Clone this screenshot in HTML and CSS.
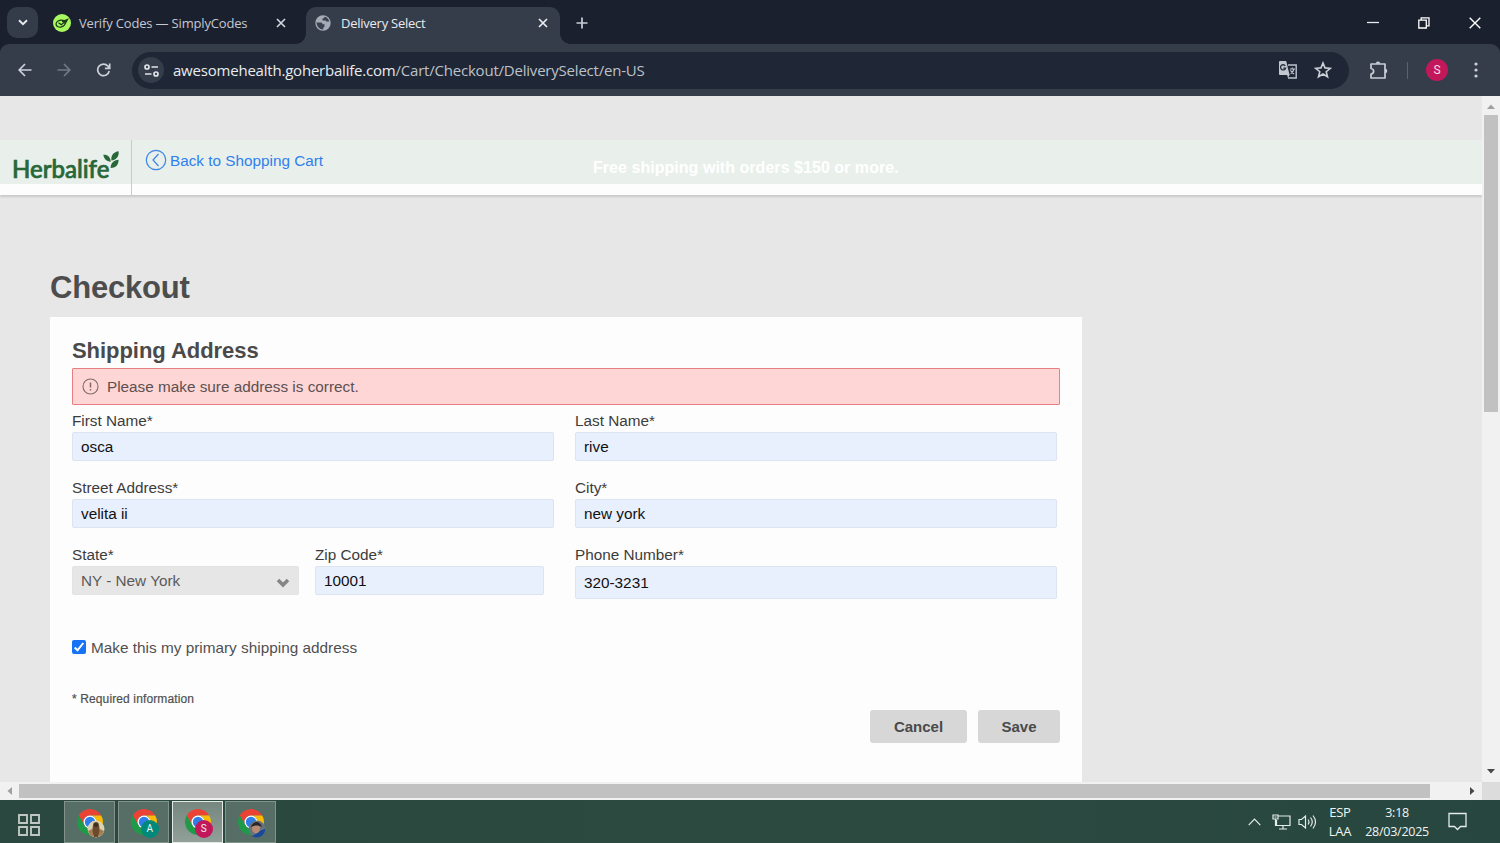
FILE: index.html
```
<!DOCTYPE html>
<html lang="en">
<head>
    <meta charset="UTF-8">
    <meta name="viewport" content="width=device-width, initial-scale=1.0">
    <link rel="stylesheet" href="styles.css">
    <title>Delivery Select</title>
</head>
<body>
    <svg class="sprite" width="0" height="0">
        <symbol id="chrome" viewBox="0 0 28 28">
            <path fill="#ea4335" d="M1.9 7A14 14 0 0 1 26.1 7H14a7 7 0 0 0-6.1 10.5z"/>
            <path fill="#fbbc05" d="M26.1 7A14 14 0 0 1 14 28l6.1-10.5A7 7 0 0 0 14 7z"/>
            <path fill="#1e9b48" d="M1.9 7A14 14 0 0 0 14 28l6.1-10.5a7 7 0 0 1-12.2 0z"/>
            <circle cx="14" cy="14" r="7" fill="#fff"/>
            <circle cx="14" cy="14" r="5.6" fill="#2f7de9"/>
        </symbol>
    </svg>

    <!-- Browser tabs -->
    <div class="tab-strip">
        <button class="tab-search"><svg width="10" height="7" viewBox="0 0 10 7"><path d="M1 1.2l4 4 4-4" fill="none" stroke="#e6e9ee" stroke-width="2"/></svg></button>
        <div class="tab">
            <svg width="18" height="18" viewBox="0 0 18 18"><circle cx="9" cy="9" r="9" fill="#a8f860"/><g fill="none" stroke="#1c3a18" stroke-width="1.3"><ellipse cx="7.6" cy="9.600" rx="4.600" ry="3.400" transform="rotate(-15 7.6 9.6)"/><path d="M5.500 8.800l2.800 2 6.200-5.300M9 7.500l5.500-2-2.500 4.500"/></g></svg>
            <span class="tab-title verify">Verify Codes — SimplyCodes</span>
            <svg class="close" width="10" height="10" viewBox="0 0 10 10"><path d="M1 1l8 8M9 1l-8 8" stroke="#d5d9df" stroke-width="1.6"/></svg>
        </div>
        <div class="tab active">
            <svg width="16" height="16" viewBox="0 0 16 16"><circle cx="8" cy="8" r="7.700" fill="#a6abb5"/><path d="M1.500 7.500h4.200c1.200 0 1.800.8 1.800 1.800h2v2.500c-1 .3-1.200 1-1.300 2.600-3.500.2-6.400-2.800-6.700-6.900zM9.500 1.700c-.2 1.300-.6 1.700-2 1.700v2h2.700c.5 0 .8.500.8 1.200h3.300C14 4.200 12 2 9.500 1.700z" fill="#3a4250"/></svg>
            <span class="tab-title">Delivery Select</span>
            <svg class="close" width="10" height="10" viewBox="0 0 10 10"><path d="M1 1l8 8M9 1l-8 8" stroke="#eceef1" stroke-width="1.7"/></svg>
        </div>
        <svg class="new-tab" width="12" height="12" viewBox="0 0 12 12"><path d="M6 .5v11M.5 6h11" stroke="#c9ced6" stroke-width="1.7"/></svg>
        <div class="window-buttons">
            <svg width="12" height="12" viewBox="0 0 12 12"><path d="M0 5.500h12" stroke="#e8eaee" stroke-width="1.300"/></svg>
            <svg width="12" height="12" viewBox="0 0 12 12"><path d="M.8 3.200h7.500v7.800H.8zM3.200 3V.8H11v8H8.500" fill="none" stroke="#fff" stroke-width="1.300"/></svg>
            <svg width="12" height="12" viewBox="0 0 12 12"><path d="M.7.700l10.600 10.600M11.300.700L.7 11.300" stroke="#fff" stroke-width="1.400"/></svg>
        </div>
    </div>

    <!-- Address bar -->
    <div class="toolbar">
        <svg width="14" height="14" viewBox="0 0 14 14"><path d="M13.500 7H1.500M7 1L1.200 7 7 13" fill="none" stroke="#ccd1d9" stroke-width="1.700"/></svg>
        <svg width="14" height="14" viewBox="0 0 14 14"><path d="M.5 7h12M7 1l5.800 6L7 13" fill="none" stroke="#727985" stroke-width="1.700"/></svg>
        <svg width="15" height="14" viewBox="0 0 15 14"><path d="M13.200 8A5.800 5.800 0 1 1 12 3.200L13.700 5M13.700.500v4.800H8.900" fill="none" stroke="#ccd1d9" stroke-width="1.700"/></svg>
        <div class="address">
            <span class="site-info"><svg width="15" height="13" viewBox="0 0 15 13"><g fill="none" stroke="#dfe3e8" stroke-width="1.700"><circle cx="3" cy="3" r="2"/><path d="M7.500 3H14M1 10h6.500"/><circle cx="12" cy="10" r="2"/></g></svg></span>
            <span class="url"><b>awesomehealth.goherbalife.com</b>/Cart/Checkout/DeliverySelect/en-US</span>
            <svg class="translate" width="20" height="20" viewBox="0 0 20 20">
                <path d="M10 5h8.200v13H10" fill="none" stroke="#bcc3cd" stroke-width="1.400"/>
                <path d="M2 1h6.200l3.400 14H2a1 1 0 0 1-1-1V2a1 1 0 0 1 1-1z" fill="#c3c8d0"/>
                <path d="M11.800 9H17M14.300 7.500V9M16 9c-.6 2.200-1.800 3.700-3.300 4.700M12.500 10.200c.8 1.700 2 2.900 3.600 3.800" fill="none" stroke="#c3c8d0" stroke-width="1.100"/>
                <path d="M7.300 5.900A2.600 2.600 0 1 0 7.600 8.200H5.300" fill="none" stroke="#29313e" stroke-width="1.300"/>
                <path d="M9 14.500h2.700l-1.700 3.500z" fill="#c3c8d0"/>
            </svg>
            <svg width="18" height="18" viewBox="0 0 18 18"><path d="M9 2l2 4.900 5.300.4-4.100 3.400 1.300 5.100L9 13l-4.500 2.800 1.300-5.100L1.700 7.300 7 6.900z" fill="none" stroke="#cbd0d8" stroke-width="1.600"/></svg>
        </div>
        <svg class="puzzle" width="19" height="19" viewBox="0 0 19 19"><path d="M2 3h14v14H2v-4c3.500-.5 3.500-5 0-5.500z" fill="none" stroke="#c8cdd6" stroke-width="1.700" stroke-linejoin="round"/><path d="M6.800 2.800a2.200 2.300 0 0 1 4.400 0zM16 7.800a2.300 2.200 0 0 1 0 4.400z" fill="#c8cdd6"/></svg>
        <span class="divider"></span>
        <span class="profile">S</span>
        <svg class="more" width="4" height="16" viewBox="0 0 4 16" fill="#ccd1d9"><circle cx="2" cy="2" r="1.600"/><circle cx="2" cy="8" r="1.600"/><circle cx="2" cy="14" r="1.600"/></svg>
    </div>

    <div class="viewport">
        <div class="page">
            <header class="site-header">
                <div class="logo"><span>Herbalife</span><svg width="16" height="19" viewBox="0 0 16 19" fill="#276738"><path d="M.3 3.800C4.500 3.300 7.500 6 7.700 10.800 3.500 10.500 1 8 .3 3.800zM15.600.2c.6 5.500-2.300 8.800-7.200 9.400C7.900 4.300 10.500.9 15.600.2zM15.600 8.800c-.2 5.600-3 8.200-8 8.200C7.900 12.300 10.500 9 15.600 8.800z"/></svg></div>
                <a class="back-link" href="#"><svg width="22" height="22" viewBox="0 0 22 22"><circle cx="11" cy="11" r="9.700" fill="none" stroke="#3a86e8" stroke-width="1.200"/><path d="M13.500 5L8 11l5.500 6" fill="none" stroke="#3a86e8" stroke-width="1.200"/></svg><span>Back to Shopping Cart</span></a>
                <p class="promo">Free shipping with orders $150 or more.</p>
            </header>

            <main>
                <h1>Checkout</h1>
                <form class="card">
                    <h2>Shipping Address</h2>
                    <div class="alert">
                        <svg width="17" height="17" viewBox="0 0 17 17"><circle cx="8.500" cy="8.500" r="7.500" fill="none" stroke="#806a6a" stroke-width="1.100"/><path d="M8.500 4.500v5M8.500 11v1.600" stroke="#806a6a" stroke-width="1.500"/></svg>
                        <span>Please make sure address is correct.</span>
                    </div>
                    <div class="fields">
                        <label>First Name*<input type="text" value="osca"></label>
                        <label>Last Name*<input type="text" value="rive"></label>
                        <label>Street Address*<input type="text" value="velita ii"></label>
                        <label>City*<input type="text" value="new york"></label>
                        <div class="state-zip">
                            <label>State*<span class="select">NY - New York<svg width="14" height="10" viewBox="0 0 14 10"><path d="M2 2l5 5 5-5" fill="none" stroke="#858585" stroke-width="3.500"/></svg></span></label>
                            <label>Zip Code*<input type="text" value="10001"></label>
                        </div>
                        <label>Phone Number*<input class="phone" type="text" value="320-3231"></label>
                    </div>
                    <div class="primary">
                        <span class="checkbox"><svg width="14" height="14" viewBox="0 0 14 14"><path d="M2.700 7.500l2.800 2.800 5.800-7.300" fill="none" stroke="#fff" stroke-width="2"/></svg></span>
                        <span>Make this my primary shipping address</span>
                    </div>
                    <p class="required">* Required information</p>
                    <div class="actions">
                        <button type="button" class="cancel">Cancel</button>
                        <button type="button" class="save">Save</button>
                    </div>
                </form>
            </main>
        </div>
        <div class="v-scroll">
            <svg width="8" height="5" viewBox="0 0 8 5"><path d="M0 5l4-4.500L8 5z" fill="#a0a0a0"/></svg>
            <div class="v-thumb"></div>
            <svg class="down" width="8" height="5" viewBox="0 0 8 5"><path d="M0 0l4 4.500L8 0z" fill="#484848"/></svg>
        </div>
        <div class="h-scroll">
            <svg width="5" height="8" viewBox="0 0 5 8"><path d="M5 0L.5 4 5 8z" fill="#a0a0a0"/></svg>
            <div class="h-thumb"></div>
            <svg class="right" width="5" height="8" viewBox="0 0 5 8"><path d="M0 0l4.500 4L0 8z" fill="#484848"/></svg>
        </div>
        <div class="corner"></div>
    </div>

    <!-- Windows taskbar -->
    <footer class="taskbar">
        <svg class="task-view" width="22" height="22" viewBox="0 0 22 22" fill="none" stroke="#bfc7c3" stroke-width="1.900"><path d="M1 1h8v8H1zM13 1h8v8h-8zM1 13h8v8H1zM13 13h8v8h-8z"/></svg>
        <div class="task"><svg width="26" height="26"><use href="#chrome"/></svg>
            <svg class="badge" width="18" height="18" viewBox="0 0 18 18"><circle cx="9" cy="9" r="8.500" fill="#d9d2b0"/><path d="M6 5c0-4 6-4 6 0l1 7-2 5H7l-2-5z" fill="#6a4a2c"/><path d="M1 11l4-2 2 8C4 16 2 14 1 11zM17 11l-4-2-2 8c3-1 5-3 6-6z" fill="#a57c4d"/><circle cx="9" cy="5" r="2" fill="#3c2e20"/></svg></div>
        <div class="task"><svg width="26" height="26"><use href="#chrome"/></svg><span class="badge teal">A</span></div>
        <div class="task current"><svg width="26" height="26"><use href="#chrome"/></svg><span class="badge pink">S</span></div>
        <div class="task"><svg width="26" height="26"><use href="#chrome"/></svg>
            <svg class="badge" width="18" height="18" viewBox="0 0 18 18"><circle cx="9" cy="9" r="8.500" fill="#69727a"/><path d="M3 16c5-1 8-6 14-7 .5 4-3 8.500-8 8.500-2 0-4-.5-6-1.500z" fill="#164a9a"/><ellipse cx="8" cy="8.500" rx="4" ry="5" fill="#b98b70"/><path d="M3 7c1-6 9-7 11 0-4-2-7-2-11 0z" fill="#27272b"/></svg></div>
        <div class="tray">
            <svg class="chevron" width="13" height="8" viewBox="0 0 13 8"><path d="M.7 7.200l5.800-6 5.800 6" fill="none" stroke="#e6ece9" stroke-width="1.200"/></svg>
            <svg class="network" width="19" height="16" viewBox="0 0 19 16"><g fill="none" stroke="#e6ece9" stroke-width="1.200"><path d="M6 2h12v9.500H4.500V6M1 1h5v4H1zM3.500 5v7M11 11.500V15M7 15h8"/></g><path d="M2.500 3h2" stroke="#e6ece9"/></svg>
            <svg class="sound" width="20" height="16" viewBox="0 0 20 16"><g fill="none" stroke="#e6ece9" stroke-width="1.200"><path d="M1 5.500h2.500L7.500 2v12l-4-3.500H1zM10 5.500q2 2.500 0 5M12.500 3.500q3.500 4.500 0 9M15 1.500q5 6.500 0 13"/></g></svg>
            <div class="lang"><span>ESP</span><span>LAA</span></div>
            <div class="clock"><span class="time">3:18</span><span>28/03/2025</span></div>
            <svg class="notify" width="19" height="19" viewBox="0 0 19 19"><path d="M1 1.500h17v13h-5.500l-3 3-3-3H1z" fill="none" stroke="#e6ece9" stroke-width="1.300"/></svg>
        </div>
    </footer>
</body>
</html>
```
FILE: styles.css
```
* {
    box-sizing: border-box;
}

body {
    font-family: "Liberation Sans", Arial, sans-serif;
    margin: 0;
    height: 843px;
    overflow: hidden;
    display: flex;
    flex-direction: column;
    background-color: #1b202f;
}

svg {
    display: block;
    flex: none;
}

.sprite {
    position: absolute;
}

h1, h2, p {
    margin: 0;
}

/* Tabs */
.tab-strip {
    height: 44px;
    flex: none;
    display: flex;
    align-items: center;
    padding: 1px 19px 0 7px;
    background-color: #1b202f;
    font-family: "Open Sans", "Noto Sans", sans-serif;
}

.tab-search {
    width: 31px;
    height: 31px;
    padding: 0;
    border: 0;
    border-radius: 10px;
    background-color: #343c4a;
    display: flex;
    align-items: center;
    justify-content: center;
}

.tab {
    display: flex;
    align-items: center;
    width: 253px;
    padding: 0 5px 0 15px;
    color: #c3c8d2;
}

.tab-title {
    font-size: 13px;
    margin-left: 8px;
    letter-spacing: -0.25px;
    white-space: nowrap;
}

.verify {
    letter-spacing: -0.17px;
}

.close {
    margin-left: auto;
}

.tab.active {
    position: relative;
    width: 254px;
    height: 37px;
    margin: 6px 0 0 15px;
    padding: 0 12px 6px 9px;
    border-radius: 10px 10px 0 0;
    background-color: #353d4b;
    color: #e9ebef;
}

.active .tab-title {
    margin-left: 10px;
}

/* flared bottom corners of the open tab */
.tab.active::before, .tab.active::after {
    content: "";
    position: absolute;
    bottom: 0;
    width: 10px;
    height: 10px;
}

.tab.active::before {
    left: -10px;
    background: radial-gradient(circle at 0 0, transparent 9.5px, #353d4b 10px);
}

.tab.active::after {
    right: -10px;
    background: radial-gradient(circle at 100% 0, transparent 9.5px, #353d4b 10px);
}

.new-tab {
    margin-left: 16px;
}

.window-buttons {
    display: flex;
    gap: 39px;
    margin-left: auto;
}

/* Toolbar */
.toolbar {
    height: 52px;
    flex: none;
    display: flex;
    align-items: center;
    gap: 25px;
    padding: 0 22px 0 18px;
    background-color: #353d4b;
    border-radius: 9px 9px 0 0;
    font-family: "Open Sans", "Noto Sans", sans-serif;
}

.address {
    flex: 1;
    height: 37px;
    display: flex;
    align-items: center;
    margin-left: -4px;
    padding: 0 17px 0 6px;
    border-radius: 19px;
    background-color: #1f2635;
}

.site-info {
    width: 26px;
    height: 26px;
    border-radius: 50%;
    background-color: #353d4b;
    display: flex;
    align-items: center;
    justify-content: center;
}

.url {
    margin: -1px 0 0 9px;
    font-size: 15px;
    letter-spacing: -0.21px;
    color: #bcc1ca;
    white-space: nowrap;
}

.url b {
    font-weight: normal;
    color: #e9ebef;
}

.translate {
    margin: 0 16px 0 auto;
}

.puzzle {
    margin-left: -5px;
}

.divider {
    width: 1px;
    height: 17px;
    margin-left: -6px;
    background-color: #5a6270;
}

.profile {
    width: 22px;
    height: 22px;
    margin-left: -7px;
    border-radius: 50%;
    background-color: #c2185b;
    color: #f2dce6;
    font: 12px/22px Roboto, sans-serif;
    text-align: center;
}

.more {
    margin-left: 1px;
}

/* Web page with its scrollbars */
.viewport {
    height: 704px;
    flex: none;
    display: grid;
    grid-template: 686px 18px / 1482px 18px;
}

.page {
    overflow: hidden;
    background-color: #e7e7e7;
    padding-top: 44px;
}

.site-header {
    height: 55px;
    display: flex;
    background: linear-gradient(#e9efeb 44px, #fdfdfd 44px);
    box-shadow: 0 2px 2px rgba(0, 0, 0, 0.13);
}

.logo {
    width: 132px;
    flex: none;
    display: flex;
    align-items: flex-start;
    padding: 11px 0 0 12px;
    border-right: 1px solid #c9cbca;
    color: #276738;
}

.logo span {
    width: 91px;
    margin-top: -1px;
    font: 500 24px/38px Lato, sans-serif;
    -webkit-text-stroke: 0.7px #276738;
}

.back-link {
    display: flex;
    align-items: flex-start;
    width: 182px;
    margin-left: 13px;
    padding-top: 9px;
    gap: 3px;
    color: #2f80ed;
    font-size: 15.300px;
    line-height: 24px;
    text-decoration: none;
    white-space: nowrap;
}

.promo {
    margin-left: 266px;
    padding-top: 16px;
    color: #fff;
    font-size: 16px;
    font-weight: bold;
    line-height: 24px;
    letter-spacing: 0.04px;
}

main {
    padding: 73px 50px 0;
}

h1 {
    font-size: 31px;
    line-height: 40px;
    letter-spacing: -0.2px;
    color: #4d4d4d;
    height: 49px;
}

.card {
    width: 1032px;
    height: 520px;
    padding: 21px 22px;
    background-color: #fdfdfd;
    color: #505050;
}

h2 {
    font-size: 22px;
    line-height: 26px;
    height: 30px;
    letter-spacing: -0.05px;
    color: #4a4a4a;
}

.alert {
    height: 37px;
    display: flex;
    align-items: center;
    padding: 0 9px;
    gap: 8px;
    border: 1px solid #e87f83;
    border-radius: 1px;
    background-color: #fed6d6;
    font-size: 15.300px;
    color: #5c5050;
}

.fields {
    display: grid;
    grid-template-columns: 482px 482px;
    gap: 17px 21px;
    padding-top: 6px;
}

label {
    display: block;
    font-size: 15.300px;
    line-height: 20px;
    color: #3c3c3c;
}

input, .select {
    display: block;
    width: 100%;
    height: 29px;
    margin: 0;
    padding: 0 8px;
    border: 1px solid #dde4f0;
    border-radius: 2px;
    background-color: #e8effd;
    color: #111;
    font: 15.300px "Liberation Sans", Arial, sans-serif;
}

label input, label .select {
    margin-top: 1px;
}

.phone {
    height: 33px;
}

.state-zip {
    display: grid;
    grid-template-columns: 227px 229px;
    gap: 16px;
}

.select {
    display: flex;
    align-items: center;
    justify-content: space-between;
    background-color: #e6e6e6;
    border-color: #e3e3e3;
    color: #5a5a5a;
}

.select svg {
    margin-top: 4px;
}

.primary {
    display: flex;
    align-items: center;
    gap: 5px;
    margin-top: 39px;
    font-size: 15.350px;
    line-height: 20px;
}

.checkbox {
    width: 14px;
    height: 14px;
    margin-bottom: 3px;
    border-radius: 2px;
    background-color: #1673f5;
}

.required {
    margin-top: 32px;
    font-size: 12px;
    letter-spacing: 0.12px;
    line-height: 18px;
    -webkit-text-stroke: 0.2px #505050;
}

.actions {
    display: flex;
    justify-content: flex-end;
    gap: 11px;
    margin-top: 2px;
}

.actions button {
    height: 33px;
    padding: 0;
    border: 0;
    border-radius: 3px;
    background-color: #d7d7d7;
    color: #4a4a4a;
    font: bold 15px "Liberation Sans", Arial, sans-serif;
}

.cancel {
    width: 97px;
}

.save {
    width: 82px;
}

.v-scroll {
    display: flex;
    flex-direction: column;
    align-items: center;
    padding: 8px 0;
    background-color: #f1f1f1;
}

.v-thumb {
    width: 14px;
    height: 297px;
    margin-top: 6px;
    background-color: #c1c1c1;
}

.down {
    margin-top: auto;
}

.h-scroll {
    display: flex;
    align-items: center;
    padding: 0 7px;
    background-color: #f1f1f1;
}

.h-thumb {
    width: 1411px;
    height: 14px;
    margin-left: 7px;
    background-color: #c1c1c1;
}

.right {
    margin-left: auto;
}

.corner {
    background-color: #dcdcdc;
}

/* Taskbar */
.taskbar {
    height: 43px;
    flex: none;
    display: flex;
    background: linear-gradient(90deg, #2a483f, #2d4a40 60%, #26463f);
    color: #f0f4f2;
    font-family: "Open Sans", "Noto Sans", sans-serif;
}

.task-view {
    margin: 14px 24px 0 18px;
}

.task {
    position: relative;
    width: 51px;
    height: 42px;
    margin: 1px 2.800px 0 0;
    padding: 7px 0 0 12px;
    border: 1px solid #83938c;
    background-color: #566e65;
}

.task.current {
    border-color: #e4e9e6;
    background: linear-gradient(#75877f, #91a099);
}

.badge {
    position: absolute;
    left: 22px;
    top: 18px;
    width: 18px;
    height: 18px;
    border-radius: 50%;
    font: 10px/18px Roboto, sans-serif;
    text-align: center;
}

.teal {
    background-color: #00897b;
}

.pink {
    background-color: #c2185b;
}

.tray {
    display: flex;
    align-items: center;
    margin-left: auto;
    padding-right: 33px;
    font-size: 12.500px;
    line-height: 19px;
    letter-spacing: -0.25px;
}

.network {
    margin-left: 11px;
}

.sound {
    margin-left: 7px;
}

.lang, .clock {
    display: flex;
    flex-direction: column;
    align-items: center;
}

.lang {
    margin: 1px 0 0 11px;
    font-size: 13px;
}

.clock {
    margin-left: 14px;
}

.notify {
    margin-left: 19px;
}
```
